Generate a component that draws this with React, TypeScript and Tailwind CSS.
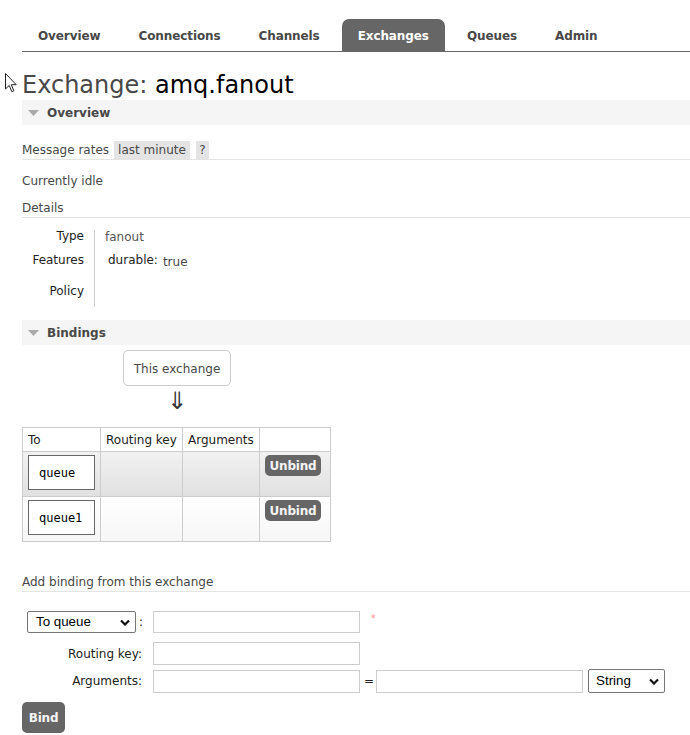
import React from "react";

const Tri = () => (
  <svg width="11" height="6" viewBox="0 0 11 6" className="shrink-0">
    <polygon points="0,0 11,0 5.5,6" fill="#aaaaaa" />
  </svg>
);

const SectionHeader = ({ title }: { title: string }) => (
  <div className="h-[25px] bg-[#f5f5f5] flex items-center pl-[6px] gap-[8px]">
    <Tri />
    <span className="font-bold text-[12px] text-[#484848]">{title}</span>
  </div>
);

const Chevron = () => (
  <svg width="10" height="7" viewBox="0 0 10 7">
    <polyline points="1,1.5 5,5.5 9,1.5" fill="none" stroke="#111" strokeWidth="2.2" />
  </svg>
);

export default function App() {
  const tabs = ["Overview", "Connections", "Channels", "Exchanges", "Queues", "Admin"];
  return (
    <div
      className="relative w-[690px] min-h-[735px] bg-white text-[12px] leading-[14px] text-[#484848] overflow-hidden"
      style={{ fontFamily: '"DejaVu Sans", Verdana, sans-serif' }}
    >
      {/* cursor */}
      <svg className="absolute left-[5px] top-[73px]" width="12" height="20" viewBox="0 0 12 20">
        <path d="M0.5,0.5 L0.5,16 L4.2,12.4 L6.8,18.6 L8.8,17.8 L6.3,11.7 L11.2,11.7 Z" fill="#fff" stroke="#222" strokeWidth="1" />
      </svg>

      <div className="pl-[22px]">
        {/* Nav */}
        <div className="pt-[19px]">
          <div className="flex gap-[6px] border-b border-[#666]">
            {tabs.map((t) => (
              <div
                key={t}
                className={
                  t === "Exchanges"
                    ? "h-[32px] pt-[1px] px-[16px] flex items-center font-bold tracking-[-0.1px] text-white bg-[#666] rounded-t-[7px]"
                    : "h-[32px] pt-[1px] px-[16px] flex items-center font-bold tracking-[-0.1px] text-[#484848]"
                }
              >
                {t}
              </div>
            ))}
          </div>
        </div>

        {/* H1 */}
        <h1 className="mt-[19px] mb-[1px] text-[24px] leading-[28px] font-normal">
          <span className="text-[#484848]">Exchange: </span>
          <span className="text-black">amq.fanout</span>
        </h1>

        <SectionHeader title="Overview" />

        {/* Message rates */}
        <div className="mt-[16px] flex items-center h-[19px] border-b border-[#e4e4e4]">
          <div className="h-[18px] flex items-center self-start">Message rates</div>
          <div className="ml-[5px] h-[18px] self-start px-[4px] bg-[#e4e4e4] flex items-center">last minute</div>
          <div className="ml-[6px] h-[18px] self-start w-[13px] bg-[#e4e4e4] flex items-center justify-center">?</div>
        </div>

        <div className="mt-[14px]">Currently idle</div>

        <div className="mt-[12px] pb-[2px] border-b border-[#e4e4e4] pt-[1px]">Details</div>

        {/* Details table */}
        <div className="mt-[12px] grid grid-cols-[73px_1fr] w-[300px]">
          <div className="h-[18px] text-right pr-[10px] border-r border-[#ccc] text-[#222] leading-[13px]">Type</div>
          <div className="h-[18px] pl-[10px] leading-[15px] text-[#555]">fanout</div>
          <div className="h-[26px] pt-[5px] text-right pr-[10px] border-r border-[#ccc] text-[#222]">Features</div>
          <div className="h-[26px] pt-[5px] pl-[13px] flex text-[#222]">
            <span>durable:</span>
            <span className="ml-[5px] mt-[2px] text-[#484848] border-b border-dotted border-[#e0e0e0] h-[14px]">true</span>
          </div>
          <div className="h-[33px] pt-[10px] text-right pr-[10px] border-r border-[#ccc] text-[#222]">Policy</div>
          <div className="h-[33px]" />
        </div>

        <div className="mt-[13px]">
          <SectionHeader title="Bindings" />
        </div>

        {/* This exchange */}
        <div className="ml-[101px] w-[108px] flex flex-col items-center">
          <div className="mt-[5px] w-[108px] h-[36px] border border-[#ccc] rounded-[5px] flex items-center justify-center pt-[1px]">
            This exchange
          </div>
          <div className="mt-[3px] h-[24px] text-[24px] leading-[24px] text-[#333]">⇓</div>
        </div>

        {/* Bindings table */}
        <table className="mt-[14px] border-collapse border border-[#ccc] text-[#222]">
          <thead>
            <tr className="h-[24px]">
              <th className="w-[78px] border border-[#ccc] font-normal text-left px-[5px]">To</th>
              <th className="w-[82px] border border-[#ccc] font-normal text-left px-[5px]">Routing key</th>
              <th className="w-[77px] border border-[#ccc] font-normal text-left px-[5px]">Arguments</th>
              <th className="w-[71px] border border-[#ccc]"></th>
            </tr>
          </thead>
          <tbody>
            {[
              { q: "queue", bg: "bg-gradient-to-b from-[#f2f2f2] to-[#e0e0e0]" },
              { q: "queue1", bg: "bg-gradient-to-b from-[#ffffff] to-[#f6f6f6]" },
            ].map((r) => (
              <tr key={r.q} className={"h-[45px] " + r.bg}>
                <td className="border border-[#ccc] align-top pt-[3px] pl-[5px]">
                  <div
                    className="w-[67px] h-[35px] border border-[#666] bg-white flex items-center pl-[10px] text-black"
                    style={{ fontFamily: '"DejaVu Sans Mono", monospace' }}
                  >
                    {r.q}
                  </div>
                </td>
                <td className="border border-[#ccc]"></td>
                <td className="border border-[#ccc]"></td>
                <td className="border border-[#ccc] align-top pt-[3px] pl-[5px]">
                  <div className="w-[56px] h-[21px] rounded-[5px] bg-[#666] text-[#f4f4f4] font-bold tracking-[-0.2px] flex items-center justify-center">
                    Unbind
                  </div>
                </td>
              </tr>
            ))}
          </tbody>
        </table>

        {/* Add binding */}
        <div className="mt-[33px] pb-[2px] border-b border-[#e4e4e4]">Add binding from this exchange</div>

        <div style={{ fontFamily: '"Liberation Sans", Arial, sans-serif' }} className="text-[13.33px] text-[#222]">
          {/* Row 1 */}
          <div className="mt-[19px] flex items-start h-[22px]">
            <div className="w-[123px] flex items-center pl-[5px]">
              <div className="w-[109px] h-[22px] border border-[#767676] rounded-[2px] flex items-center justify-between pl-[8px] pr-[5px] text-black">
                <span>To queue</span>
                <Chevron />
              </div>
              <span className="ml-[3px]" style={{ fontFamily: '"DejaVu Sans", sans-serif', fontSize: 12 }}>:</span>
            </div>
            <div className="ml-[8px] w-[207px] h-[22px] border border-[#ccc]" />
            <span className="ml-[11px] mt-[2px] text-[#f99] text-[12px] leading-[12px]">*</span>
          </div>
          {/* Row 2 */}
          <div className="mt-[9px] flex items-center h-[23px]">
            <div className="w-[123px] pr-[3px] text-right text-[12px]" style={{ fontFamily: '"DejaVu Sans", sans-serif' }}>
              Routing key:
            </div>
            <div className="ml-[8px] w-[207px] h-[23px] border border-[#ccc]" />
          </div>
          {/* Row 3 */}
          <div className="mt-[4px] flex items-center h-[24px]">
            <div className="w-[123px] pr-[3px] text-right text-[12px]" style={{ fontFamily: '"DejaVu Sans", sans-serif' }}>
              Arguments:
            </div>
            <div className="ml-[8px] w-[207px] h-[23px] border border-[#ccc]" />
            <span className="ml-[4px] text-[12px]" style={{ fontFamily: '"DejaVu Sans", sans-serif' }}>=</span>
            <div className="ml-[2px] w-[207px] h-[23px] border border-[#ccc]" />
            <div className="ml-[5px] w-[77px] h-[24px] border border-[#767676] rounded-[2px] flex items-center justify-between pl-[7px] pr-[5px] text-black">
              <span>String</span>
              <Chevron />
            </div>
          </div>
        </div>

        <div className="mt-[9px] w-[43px] h-[31px] rounded-[5px] bg-[#666] text-[#f4f4f4] font-bold tracking-[-0.2px] flex items-center justify-center">
          Bind
        </div>
      </div>
    </div>
  );
}
